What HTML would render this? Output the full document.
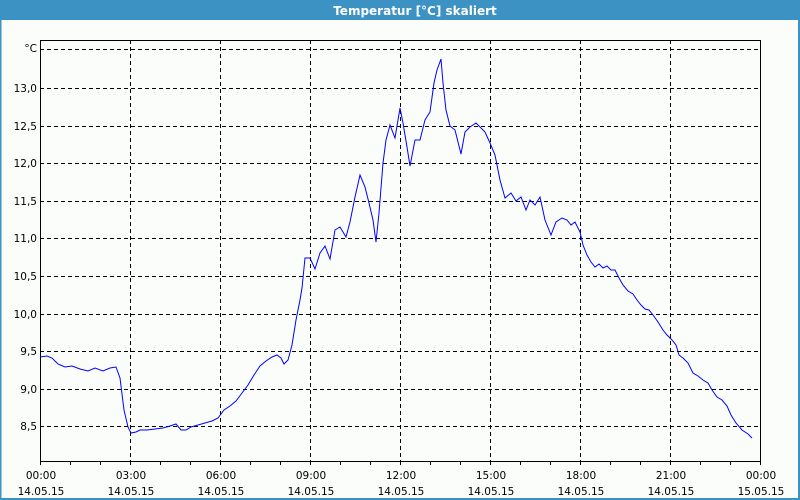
<!DOCTYPE html>
<html><head><style>
html,body{margin:0;padding:0;width:800px;height:500px;overflow:hidden;background:#fbfdfb;}
svg{display:block;font-family:"DejaVu Sans","Liberation Sans",sans-serif;}
</style></head><body>
<svg width="800" height="500" viewBox="0 0 800 500">
<rect x="0" y="0" width="800" height="500" fill="#fbfdfb"/>
<rect x="0" y="0" width="800" height="20" fill="#3d92c4"/>
<rect x="0" y="0" width="1.5" height="500" fill="#3d92c4"/>
<rect x="798" y="0" width="2" height="500" fill="#3d92c4"/>
<rect x="0" y="498" width="800" height="2" fill="#3d92c4"/>
<text x="415" y="15" fill="#fff" font-size="12" font-weight="bold" text-anchor="middle">Temperatur [°C] skaliert</text>
<g stroke="#000" stroke-width="1" stroke-dasharray="4,3" fill="none">
<line x1="40" y1="49.5" x2="760" y2="49.5"/>
<line x1="40" y1="88.5" x2="760" y2="88.5"/>
<line x1="40" y1="126.5" x2="760" y2="126.5"/>
<line x1="40" y1="163.5" x2="760" y2="163.5"/>
<line x1="40" y1="201.5" x2="760" y2="201.5"/>
<line x1="40" y1="238.5" x2="760" y2="238.5"/>
<line x1="40" y1="276.5" x2="760" y2="276.5"/>
<line x1="40" y1="314.5" x2="760" y2="314.5"/>
<line x1="40" y1="351.5" x2="760" y2="351.5"/>
<line x1="40" y1="389.5" x2="760" y2="389.5"/>
<line x1="40" y1="426.5" x2="760" y2="426.5"/>
<line x1="130.5" y1="40" x2="130.5" y2="461"/>
<line x1="220.5" y1="40" x2="220.5" y2="461"/>
<line x1="310.5" y1="40" x2="310.5" y2="461"/>
<line x1="400.5" y1="40" x2="400.5" y2="461"/>
<line x1="490.5" y1="40" x2="490.5" y2="461"/>
<line x1="580.5" y1="40" x2="580.5" y2="461"/>
<line x1="670.5" y1="40" x2="670.5" y2="461"/>
</g>
<rect x="40.5" y="40.5" width="720" height="421" fill="none" stroke="#000" stroke-width="1"/>
<g stroke="#000" stroke-width="1">
<line x1="70.5" y1="461" x2="70.5" y2="465"/><line x1="100.5" y1="461" x2="100.5" y2="465"/><line x1="130.5" y1="461" x2="130.5" y2="465"/>
<line x1="160.5" y1="461" x2="160.5" y2="465"/><line x1="190.5" y1="461" x2="190.5" y2="465"/><line x1="220.5" y1="461" x2="220.5" y2="465"/>
<line x1="250.5" y1="461" x2="250.5" y2="465"/><line x1="280.5" y1="461" x2="280.5" y2="465"/><line x1="310.5" y1="461" x2="310.5" y2="465"/>
<line x1="340.5" y1="461" x2="340.5" y2="465"/><line x1="370.5" y1="461" x2="370.5" y2="465"/><line x1="400.5" y1="461" x2="400.5" y2="465"/>
<line x1="430.5" y1="461" x2="430.5" y2="465"/><line x1="460.5" y1="461" x2="460.5" y2="465"/><line x1="490.5" y1="461" x2="490.5" y2="465"/>
<line x1="520.5" y1="461" x2="520.5" y2="465"/><line x1="550.5" y1="461" x2="550.5" y2="465"/><line x1="580.5" y1="461" x2="580.5" y2="465"/>
<line x1="610.5" y1="461" x2="610.5" y2="465"/><line x1="640.5" y1="461" x2="640.5" y2="465"/><line x1="670.5" y1="461" x2="670.5" y2="465"/>
<line x1="700.5" y1="461" x2="700.5" y2="465"/><line x1="730.5" y1="461" x2="730.5" y2="465"/><line x1="40.5" y1="461" x2="40.5" y2="465"/><line x1="760.5" y1="461" x2="760.5" y2="465"/>
</g>
<g font-size="10.5" fill="#000" text-anchor="end">
<text x="37" y="52">°C</text>
<text x="37" y="92">13,0</text><text x="37" y="130">12,5</text><text x="37" y="167">12,0</text>
<text x="37" y="205">11,5</text><text x="37" y="242">11,0</text><text x="37" y="280">10,5</text>
<text x="37" y="318">10,0</text><text x="37" y="355">9,5</text><text x="37" y="393">9,0</text><text x="37" y="430">8,5</text>
</g>
<g font-size="10.5" fill="#000" text-anchor="middle">
<text x="41" y="479">00:00</text><text x="41" y="495">14.05.15</text>
<text x="131" y="479">03:00</text><text x="131" y="495">14.05.15</text>
<text x="221" y="479">06:00</text><text x="221" y="495">14.05.15</text>
<text x="311" y="479">09:00</text><text x="311" y="495">14.05.15</text>
<text x="401" y="479">12:00</text><text x="401" y="495">14.05.15</text>
<text x="491" y="479">15:00</text><text x="491" y="495">14.05.15</text>
<text x="581" y="479">18:00</text><text x="581" y="495">14.05.15</text>
<text x="671" y="479">21:00</text><text x="671" y="495">14.05.15</text>
<text x="761" y="479">00:00</text><text x="761" y="495">15.05.15</text>
</g>
<polyline fill="none" stroke="#0000ff" stroke-width="1" points="40,357 47,356 52,358 58,364 65,367 72,366 80,369 88,371 95,368 103,371 110,368 116,367 120,378 124,410 128,427 131,433 136,432 140,430 147,430 155,429 163,428 170,426 176,424 181,430 186,430 191,427 198,425 205,423 212,421 218,418 224,410 230,406 236,401 242,393 248,385 254,375 260,366 266,361 272,357 277,355 281,358 284,364 288,360 292,345 296,320 300,300 302,288 305,258 310,258 315,269 320,253 325,246 330,259 335,230 340,227 346,237 350,222 355,197 360,175 365,187 369,203 373,220 376,242 379,213 383,163 386,140 390,125 395,138 400,108 403,123 407,147 410,166 415,140 420,140 425,120 430,112 434,83 437,70 441,59 443,83 446,110 450,126 455,130 461,154 465,132 470,127 476,123 482,129 485,132 490,143 495,155 500,180 505,198 511,193 516,201 521,197 526,210 530,200 535,205 540,197 545,220 551,235 556,222 562,218 567,220 571,225 575,222 580,232 583,245 587,255 591,262 595,267 599,264 603,268 607,266 611,270 615,270 619,278 623,285 628,291 633,294 637,300 641,305 645,309 649,310 653,315 658,322 663,330 667,335 672,340 676,345 679,355 683,358 688,363 693,373 698,376 703,380 708,383 712,390 717,397 722,400 727,406 731,415 736,423 742,430 748,434 752,438"/>
</svg>
</body></html>
